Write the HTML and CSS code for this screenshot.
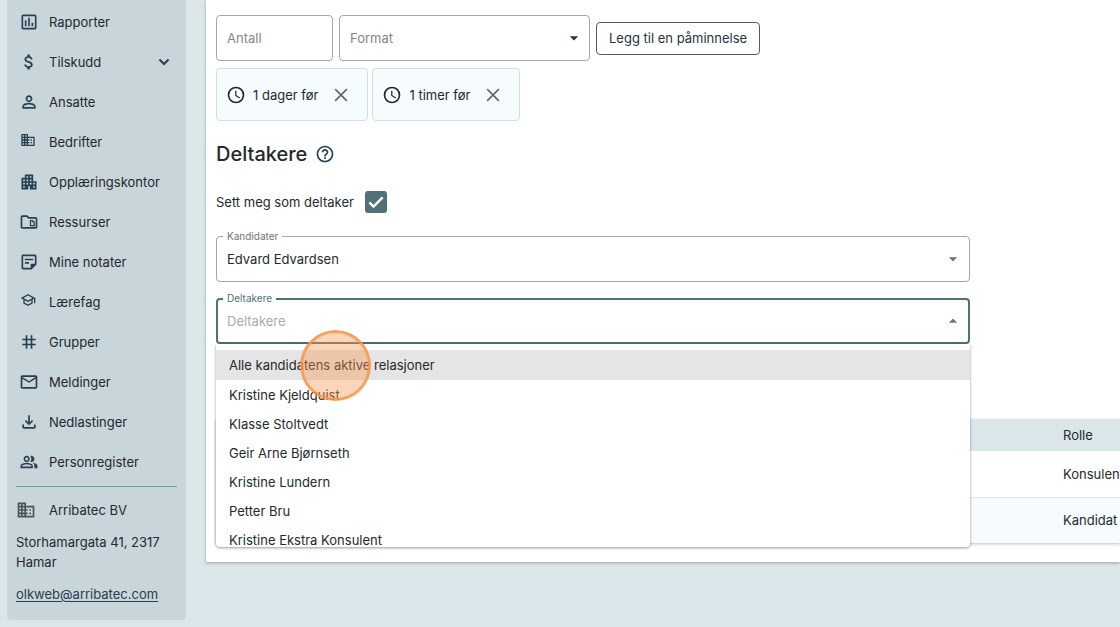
FILE: index.html
```html
<!DOCTYPE html>
<html lang="no">
<head>
    <meta charset="UTF-8">
    <meta name="viewport" content="width=device-width, initial-scale=1.0">
    <title>Deltakere</title>
    <link rel="stylesheet" href="styles.css">
</head>
<body>
    <div class="layout">
        <aside class="sidebar">
            <nav>
                <a class="nav-item" href="#">
                    <svg class="icon" viewBox="0 0 24 24"><path d="M19 3H5c-1.1 0-2 .9-2 2v14c0 1.1.9 2 2 2h14c1.1 0 2-.9 2-2V5c0-1.1-.9-2-2-2zm0 16H5V5h14v14zM7 10h2v7H7zm4-3h2v10h-2zm4 6h2v4h-2z"/></svg>
                    <span>Rapporter</span>
                </a>
                <a class="nav-item" href="#">
                    <svg class="icon" viewBox="0 0 24 24"><path d="M11.8 10.9c-2.27-.59-3-1.2-3-2.15 0-1.09 1.01-1.85 2.7-1.85 1.78 0 2.44.85 2.5 2.1h2.21c-.07-1.72-1.12-3.3-3.21-3.81V3h-3v2.16c-1.94.42-3.5 1.68-3.5 3.61 0 2.31 1.91 3.46 4.7 4.13 2.5.6 3 1.48 3 2.41 0 .69-.49 1.79-2.7 1.79-2.06 0-2.87-.92-2.98-2.1h-2.2c.12 2.19 1.76 3.42 3.68 3.83V21h3v-2.15c1.95-.37 3.5-1.5 3.5-3.55 0-2.84-2.43-3.81-4.7-4.4z"/></svg>
                    <span>Tilskudd</span>
                    <svg class="icon chevron" viewBox="0 0 24 24"><path d="M7.400 8.100 12 12.700l4.600-4.600L18.300 9.800 12 16.100 5.700 9.800z"/></svg>
                </a>
                <a class="nav-item" href="#">
                    <svg class="icon" viewBox="0 0 24 24"><path d="M12 5.9a2.1 2.1 0 1 1 0 4.2 2.1 2.1 0 0 1 0-4.2m0 9c2.97 0 6.1 1.46 6.1 2.1v1.1H5.9V17c0-.64 3.13-2.1 6.1-2.1M12 4C9.79 4 8 5.79 8 8s1.79 4 4 4 4-1.79 4-4-1.79-4-4-4zm0 9c-2.67 0-8 1.34-8 4v3h16v-3c0-2.66-5.33-4-8-4z"/></svg>
                    <span>Ansatte</span>
                </a>
                <a class="nav-item" href="#">
                    <svg class="icon icon-small" viewBox="0 0 24 24"><path d="M12 7V3H2v18h20V7H12zM6 19H4v-2h2v2zm0-4H4v-2h2v2zm0-4H4V9h2v2zm0-4H4V5h2v2zm4 12H8v-2h2v2zm0-4H8v-2h2v2zm0-4H8V9h2v2zm0-4H8V5h2v2zm10 12h-8v-2h2v-2h-2v-2h2v-2h-2V9h8v10zm-2-8h-2v2h2v-2zm0 4h-2v2h2v-2z"/></svg>
                    <span>Bedrifter</span>
                </a>
                <a class="nav-item" href="#">
                    <svg class="icon" viewBox="0 0 24 24"><path d="M17 11V3H7v4H3v14h8v-4h2v4h8V11h-4zM7 19H5v-2h2v2zm0-4H5v-2h2v2zm0-4H5V9h2v2zm4 4H9v-2h2v2zm0-4H9V9h2v2zm0-4H9V5h2v2zm4 8h-2v-2h2v2zm0-4h-2V9h2v2zm0-4h-2V5h2v2zm4 12h-2v-2h2v2zm0-4h-2v-2h2v2z"/></svg>
                    <span>Opplæringskontor</span>
                </a>
                <a class="nav-item" href="#">
                    <svg class="icon" viewBox="0 0 24 24"><path d="M20 6h-8l-2-2H4c-1.1 0-2 .9-2 2v12c0 1.1.9 2 2 2h16c1.1 0 2-.9 2-2V8c0-1.1-.9-2-2-2zm0 12H4V6h5.2l2 2H20v10z"/><path d="M13 9.5h3.500l2.500 2.500v5h-6zM14.500 11v4.500h3v-3h-1.500V11z" fill-rule="evenodd"/></svg>
                    <span>Ressurser</span>
                </a>
                <a class="nav-item" href="#">
                    <svg class="icon" viewBox="0 0 24 24"><path d="M19 5v9h-5v5H5V5h14m0-2H5c-1.1 0-2 .9-2 2v14c0 1.1.9 2 2 2h10l6-6V5c0-1.1-.9-2-2-2zm-7 11H7v-2h5v2zm5-4H7V8h10v2z"/></svg>
                    <span>Mine notater</span>
                </a>
                <a class="nav-item" href="#">
                    <svg class="icon icon-small" viewBox="0 0 24 24"><path d="M12 3 1 9l4 2.18v6L12 21l7-3.82v-6l2-1.09V17h2V9L12 3zm6.82 6L12 12.72 5.18 9 12 5.28 18.82 9zM17 15.99l-5 2.73-5-2.73v-3.72L12 15l5-2.73v3.72z"/></svg>
                    <span>Lærefag</span>
                </a>
                <a class="nav-item" href="#">
                    <svg class="icon" viewBox="0 0 24 24"><path d="M20 10V8h-4V4h-2v4h-4V4H8v4H4v2h4v4H4v2h4v4h2v-4h4v4h2v-4h4v-2h-4v-4h4zm-6 4h-4v-4h4v4z"/></svg>
                    <span>Grupper</span>
                </a>
                <a class="nav-item" href="#">
                    <svg class="icon" viewBox="0 0 24 24"><path d="M20 4H4c-1.1 0-2 .9-2 2v12c0 1.1.9 2 2 2h16c1.1 0 2-.9 2-2V6c0-1.1-.9-2-2-2zm0 14H4V8l8 5 8-5v10zm-8-7L4 6h16l-8 5z"/></svg>
                    <span>Meldinger</span>
                </a>
                <a class="nav-item" href="#">
                    <svg class="icon" viewBox="0 0 24 24"><path d="M11 4h2v8.200l2.600-2.600L17 11l-5 5-5-5 1.400-1.400 2.600 2.600zM4 15h2v3h12v-3h2v3c0 1.100-.9 2-2 2H6c-1.100 0-2-.9-2-2z"/></svg>
                    <span>Nedlastinger</span>
                </a>
                <a class="nav-item" href="#">
                    <svg class="icon" viewBox="-1 -1 26 26"><path d="M16.67 13.13C18.04 14.06 19 15.32 19 17v3h4v-3c0-2.18-3.57-3.47-6.33-3.87zM15 12c2.21 0 4-1.79 4-4s-1.79-4-4-4c-.47 0-.91.1-1.33.24C14.5 5.27 15 6.58 15 8s-.5 2.73-1.33 3.76c.42.14.86.24 1.33.24zM9 12c2.21 0 4-1.79 4-4s-1.79-4-4-4-4 1.79-4 4 1.79 4 4 4zm0-6c1.1 0 2 .9 2 2s-.9 2-2 2-2-.9-2-2 .9-2 2-2zm0 7c-2.67 0-8 1.34-8 4v3h16v-3c0-2.66-5.33-4-8-4zm6 5H3v-.99C3.2 16.29 6.3 15 9 15s5.8 1.29 6 2v1z"/></svg>
                    <span>Personregister</span>
                </a>
            </nav>
            <!-- Firmainfo -->
            <div class="company">
                <div class="company-name">
                    <svg class="icon" viewBox="0 0 24 24"><path d="M12 7V3H2v18h20V7H12zM6 19H4v-2h2v2zm0-4H4v-2h2v2zm0-4H4V9h2v2zm0-4H4V5h2v2zm4 12H8v-2h2v2zm0-4H8v-2h2v2zm0-4H8V9h2v2zm0-4H8V5h2v2zm10 12h-8v-2h2v-2h-2v-2h2v-2h-2V9h8v10zm-2-8h-2v2h2v-2zm0 4h-2v2h2v-2z"/></svg>
                    <span>Arribatec BV</span>
                </div>
                <p>Storhamargata 41, 2317 Hamar</p>
                <a href="mailto:olkweb@arribatec.com">olkweb@arribatec.com</a>
            </div>
        </aside>

        <main class="card">
            <!-- Påminnelser -->
            <div class="reminder-row">
                <input class="field amount" type="text" placeholder="Antall" aria-label="Antall">
                <div class="select-wrap format">
                    <select class="field" aria-label="Format">
                        <option>Format</option>
                    </select>
                    <svg class="arrow" viewBox="0 0 24 24"><path d="m7 10 5 5 5-5z"/></svg>
                </div>
                <button class="add-button" type="button">Legg til en påminnelse</button>
            </div>
            <div class="chips">
                <div class="chip">
                    <svg class="icon" viewBox="0 0 24 24"><path d="M12 2a10 10 0 1 0 0 20 10 10 0 0 0 0-20zm0 18a8 8 0 1 1 0-16 8 8 0 0 1 0 16zm.5-13H11v6l5.200 3.200.8-1.300-4.500-2.700z"/></svg>
                    <span>1 dager før</span>
                    <button type="button" aria-label="Fjern">
                        <svg class="icon" viewBox="0 0 24 24"><path d="M5 5l14 14M19 5 5 19"/></svg>
                    </button>
                </div>
                <div class="chip">
                    <svg class="icon" viewBox="0 0 24 24"><path d="M12 2a10 10 0 1 0 0 20 10 10 0 0 0 0-20zm0 18a8 8 0 1 1 0-16 8 8 0 0 1 0 16zm.5-13H11v6l5.200 3.200.8-1.300-4.500-2.700z"/></svg>
                    <span>1 timer før</span>
                    <button type="button" aria-label="Fjern">
                        <svg class="icon" viewBox="0 0 24 24"><path d="M5 5l14 14M19 5 5 19"/></svg>
                    </button>
                </div>
            </div>

            <!-- Deltakere -->
            <div class="heading">
                <h2>Deltakere</h2>
                <svg class="icon" viewBox="0 0 24 24"><path d="M11 18h2v-2h-2v2zm1-16C6.48 2 2 6.48 2 12s4.48 10 10 10 10-4.48 10-10S17.52 2 12 2zm0 18c-4.41 0-8-3.59-8-8s3.59-8 8-8 8 3.59 8 8-3.59 8-8 8zm0-14c-2.21 0-4 1.79-4 4h2c0-1.1.9-2 2-2s2 .9 2 2c0 2-3 1.75-3 5h2c0-2.25 3-2.5 3-5 0-2.21-1.79-4-4-4z"/></svg>
            </div>
            <div class="check-row">
                <label for="self">Sett meg som deltaker</label>
                <span class="check">
                    <input type="checkbox" id="self" checked>
                    <svg viewBox="0 0 24 24"><path d="m4 12.500 5 5L20 6.500"/></svg>
                </span>
            </div>
            <div class="select-wrap wide">
                <label for="candidates">Kandidater</label>
                <select class="field filled" id="candidates">
                    <option>Edvard Edvardsen</option>
                </select>
                <svg class="arrow muted" viewBox="0 0 24 24"><path d="m7 10 5 5 5-5z"/></svg>
            </div>
            <div class="select-wrap wide">
                <label class="active" for="participants">Deltakere</label>
                <input class="field focused" id="participants" type="text" placeholder="Deltakere" role="combobox" aria-expanded="true" aria-controls="participant-list">
                <svg class="arrow muted" viewBox="0 0 24 24"><path d="m7 14 5-5 5 5z"/></svg>
                <ul class="options" id="participant-list" role="listbox">
                    <li class="selected" role="option" aria-selected="true">Alle kandidatens aktive relasjoner</li>
                    <li role="option">Kristine Kjeldquist</li>
                    <li role="option">Klasse Stoltvedt</li>
                    <li role="option">Geir Arne Bjørnseth</li>
                    <li role="option">Kristine Lundern</li>
                    <li role="option">Petter Bru</li>
                    <li role="option">Kristine Ekstra Konsulent</li>
                </ul>
                <span class="click-marker"></span>
            </div>

            <table>
                <thead>
                    <tr><th></th><th>Rolle</th></tr>
                </thead>
                <tbody>
                    <tr><td></td><td>Konsulent</td></tr>
                    <tr><td></td><td>Kandidat</td></tr>
                </tbody>
            </table>
        </main>
    </div>
</body>
</html>
```
FILE: styles.css
```css
* {
    box-sizing: border-box;
}

body {
    margin: 0;
    background-color: #dbe6eb;
    color: #24292c;
    font-family: Inter, "Liberation Sans", sans-serif;
    font-size: 13px;
    line-height: 20px;
    overflow: hidden;
}

button,
input,
select {
    font: inherit;
}

.layout {
    display: flex;
    align-items: flex-start;
    gap: 20px;
    padding-left: 7px;
}

.icon {
    width: 20px;
    height: 20px;
    flex-shrink: 0;
    fill: currentColor;
}

/* Sidemeny */
.sidebar {
    flex: 0 0 179px;
    padding: 2px 9px 16px;
    background-color: #c8d5db;
    border-radius: 0 0 4px 4px;
}

.nav-item {
    display: flex;
    align-items: center;
    gap: 10px;
    height: 40px;
    padding-left: 3px;
    color: #24292c;
    text-decoration: none;
}

.nav-item .icon {
    fill: #26404f;
}

.nav-item .icon-small {
    width: 16px;
    height: 16px;
    margin: 0 3px 4px 1px;
}

.nav-item .chevron {
    margin-left: auto;
    margin-right: 3px;
}

.company {
    margin-top: 4px;
    padding-top: 13px;
    border-top: 1px solid #7499a5;
}

.company-name {
    display: flex;
    align-items: center;
    gap: 13px;
}

.company-name .icon {
    fill: #4c5559;
}

.company p {
    margin: 12px 0;
}

.company a {
    display: block;
    color: #26404f;
    text-underline-offset: 2px;
}

/* Hovedinnhold */
.card {
    flex: 1;
    min-width: 0;
    padding: 15px 0 19px 10px;
    background-color: #fff;
    box-shadow: 0 1px 3px rgba(0, 0, 0, 0.3);
}

.field {
    width: 100%;
    height: 46px;
    padding: 0 10px;
    border: 1px solid #a3a5a6;
    border-radius: 4px;
    background-color: #fff;
    color: #80868a;
    appearance: none;
    outline: none;
}

.field::placeholder {
    color: #85898c;
    opacity: 1;
}

.field.filled {
    color: #24292c;
}

.field.focused {
    padding: 0 9px;
    border: 2px solid #527078;
}

.field.focused::placeholder {
    color: #a9abac;
}

.reminder-row {
    display: flex;
    align-items: center;
    gap: 6px;
}

.amount {
    width: 117px;
}

.select-wrap {
    position: relative;
}

.format {
    width: 251px;
}

.wide {
    width: 754px;
    margin-top: 16px;
}

.select-wrap label {
    position: absolute;
    top: -8px;
    left: 7px;
    padding: 0 4px;
    background-color: #fff;
    color: #6f7476;
    font-size: 10px;
    line-height: 16px;
}

.select-wrap label.active {
    color: #527078;
}

.arrow {
    position: absolute;
    top: 13px;
    right: 6px;
    width: 20px;
    height: 20px;
    fill: #26323a;
    pointer-events: none;
}

.arrow.muted {
    right: 7px;
    fill: #747474;
}

.add-button {
    height: 33px;
    padding: 0 12px;
    border: 1px solid #505d65;
    border-radius: 4px;
    background-color: #fff;
    color: #26343d;
}

.chips {
    display: flex;
    gap: 4px;
    margin-top: 7px;
}

.chip {
    display: flex;
    align-items: center;
    height: 53px;
    padding: 0 16px 0 9px;
    border: 1px solid #d3e0e4;
    border-radius: 4px;
    background-color: #f6fbfe;
}

.chip span {
    margin: 0 13px 0 7px;
}

.chip button {
    display: flex;
    padding: 0;
    border: none;
    background: none;
    color: #666;
}

.chip button path {
    stroke: currentColor;
    stroke-width: 2;
}

.heading {
    display: flex;
    align-items: center;
    gap: 8px;
    margin-top: 21px;
}

.heading h2 {
    margin: 0;
    font-size: 20px;
    font-weight: 500;
    line-height: 24px;
}

.heading .icon {
    fill: #26404f;
}

.check-row {
    display: flex;
    align-items: center;
    gap: 11px;
    height: 22px;
    margin: 25px 0 23px;
}

.check {
    position: relative;
    display: flex;
}

.check input {
    width: 22px;
    height: 22px;
    margin: 0;
    border-radius: 3px;
    background-color: #527078;
    appearance: none;
}

.check svg {
    position: absolute;
    inset: 1px;
    fill: none;
    stroke: #fff;
    stroke-width: 3;
    pointer-events: none;
}

/* Nedtrekksliste */
.options {
    position: absolute;
    top: 100%;
    left: 0;
    right: 0;
    height: 203px;
    margin: 0;
    padding: 6px 0;
    border-radius: 0 0 4px 4px;
    background-color: #fff;
    box-shadow: 0 1px 3px rgba(0, 0, 0, 0.4);
    list-style: none;
    overflow: hidden;
}

.options li {
    padding: 6px 13px 4px;
    line-height: 19px;
}

.options .selected {
    padding-bottom: 5px;
    background-color: #e5e5e5;
}

.click-marker {
    position: absolute;
    top: 32px;
    left: 84px;
    width: 71px;
    height: 71px;
    border: 3px solid rgba(247, 148, 72, 0.8);
    border-radius: 50%;
    background-color: rgba(250, 150, 80, 0.4);
    pointer-events: none;
}

/* Tabell */
table {
    width: 100%;
    margin-top: 75px;
    border-collapse: collapse;
    table-layout: fixed;
    box-shadow: 0 1px 3px rgba(0, 0, 0, 0.25);
}

th,
td {
    height: 46px;
    padding: 0;
    text-align: left;
    font-weight: 400;
    white-space: nowrap;
}

th {
    height: 32px;
    background-color: #dbe6eb;
}

th:last-child {
    width: 57px;
}

tbody tr + tr {
    border-top: 1px solid #e0e4e6;
    background-color: #f6fbfe;
}
```
